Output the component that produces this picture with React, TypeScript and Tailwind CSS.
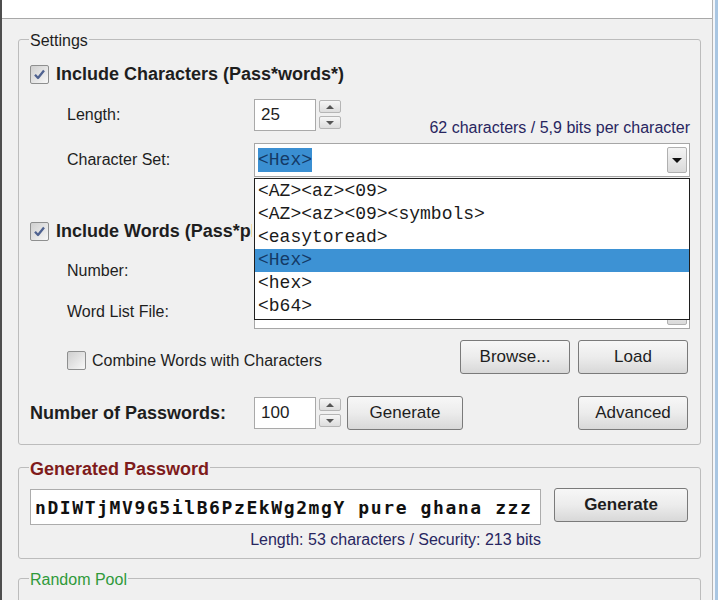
import React from "react";

const ui = "font-['Liberation_Sans',Arial,sans-serif]";
const mono = "font-['Liberation_Mono','Courier_New',monospace]";

function Check({ checked }: { checked?: boolean }) {
    return (
        <span className="flex h-[19px] w-[19px] shrink-0 items-center justify-center rounded-[2px] border border-[#8e8f8f] bg-linear-to-br from-[#cfcfcf] to-[#f8f8f8]">
            {checked && (
                <svg width="13" height="13" viewBox="0 0 13 13">
                    <path d="M2 6.8 L5 10 L11 2.5" fill="none" stroke="#4f6290" strokeWidth="2.3" strokeLinejoin="round" />
                </svg>
            )}
        </span>
    );
}

function Spin() {
    return (
        <div className="ml-[3px] flex flex-col gap-[3px] pt-[1px]">
            <span className="flex h-[13px] w-[22px] items-center justify-center rounded-[2px] border border-[#b5b5b5] bg-linear-to-b from-[#f6f6f6] to-[#dddddd]">
                <svg width="8" height="4" viewBox="0 0 8 4">
                    <path d="M0 4 L4 0 L8 4Z" fill="#555" />
                </svg>
            </span>
            <span className="flex h-[13px] w-[22px] items-center justify-center rounded-[2px] border border-[#b5b5b5] bg-linear-to-b from-[#f6f6f6] to-[#dddddd]">
                <svg width="8" height="4" viewBox="0 0 8 4">
                    <path d="M0 0 L8 0 L4 4Z" fill="#555" />
                </svg>
            </span>
        </div>
    );
}

function NumBox({ value }: { value?: string }) {
    return (
        <div className="flex h-[32px] w-[62px] items-center border border-[#a9a9a9] bg-white pl-[6px] text-[17px] text-[#1e1e1e]">
            {value}
        </div>
    );
}

function Btn({ label, w, bold }: { label: string; w: string; bold?: boolean }) {
    return (
        <button
            className={`${w} h-[34px] rounded-[3px] border border-[#7a7a7a] bg-linear-to-b from-[#f7f7f7] via-[#ececec] to-[#d8d8d8] text-[17px] text-[#1e1e1e] ${bold ? "font-bold" : ""}`}
        >
            {label}
        </button>
    );
}

function DropArrow() {
    return (
        <span className="ml-auto flex h-[26px] w-[20px] items-center justify-center rounded-[2px] border border-[#b0b0b0] bg-linear-to-b from-[#f4f4f4] to-[#dadada]">
            <svg width="10" height="5" viewBox="0 0 10 5">
                <path d="M0 0 L10 0 L5 5Z" fill="#111" />
            </svg>
        </span>
    );
}

const sets = ["<AZ><az><09>", "<AZ><az><09><symbols>", "<easytoread>", "<Hex>", "<hex>", "<b64>"];

export default function App() {
    return (
        <div className={`flex h-[600px] w-[718px] overflow-hidden bg-[#f0f0f0] ${ui} text-[#1e1e1e]`}>
            <div className="w-[2px] shrink-0 bg-[#4e4e4e]" />

            <div className="flex w-[710px] shrink-0 flex-col">
                <div className="h-[19px] shrink-0 border-b border-[#a8a8a8] bg-white" />

                {/* Settings */}
                <fieldset className="ml-[16px] mt-[10px] w-[683px] rounded-[3px] border border-[#bcbcbc] pb-[14px] pl-[11px] pr-[10px]">
                    <legend className="ml-[-1px] px-[1px] text-[16px] leading-[20px]">
                        <span className="relative top-[2px]">Settings</span>
                    </legend>

                    <div className="mt-[15px] flex h-[20px] items-center">
                        <Check checked />
                        <span className="ml-[7px] text-[18px] font-bold">Include Characters (Pass*words*)</span>
                    </div>

                    <div className="mt-[15px] flex h-[38px] items-start">
                        <span className="ml-[37px] flex h-[32px] w-[187px] items-center text-[16px]">Length:</span>
                        <NumBox value="25" />
                        <Spin />
                        <div className="flex flex-1 justify-end self-stretch">
                            <span className="self-end text-[16px] leading-[18px] text-[#282660]">
                                62 characters / 5,9 bits per character
                            </span>
                        </div>
                    </div>

                    <div className="mt-[6px] flex h-[34px] items-center">
                        <span className="ml-[37px] w-[187px] text-[16px]">Character Set:</span>
                        <div className="relative flex h-[34px] flex-1 items-center border border-[#a6a6a6] bg-white pl-[3px] pr-[2px]">
                            <span className={`${mono} h-[24px] bg-[#3a8fd2] text-[18px] leading-[24px] text-[#143a66]`}>
                                {"<Hex>"}
                            </span>
                            <DropArrow />

                            <div className="absolute left-[-1px] right-[-1px] top-[34px] z-10 border border-[#1e1e1e] bg-white py-[1px]">
                                {sets.map((s) => (
                                    <div
                                        key={s}
                                        className={`${mono} h-[23px] pl-[3px] text-[18px] leading-[23px] ${
                                            s === "<Hex>" ? "bg-[#3d92d4] text-[#143a66]" : "text-[#1a1a1a]"
                                        }`}
                                    >
                                        {s}
                                    </div>
                                ))}
                            </div>
                        </div>
                    </div>

                    <div className="mt-[44px] flex h-[20px] items-center">
                        <Check checked />
                        <span className="ml-[7px] w-[196px] overflow-hidden whitespace-nowrap text-[18px] font-bold">
                            Include Words (Pass*phrases*)
                        </span>
                    </div>

                    <div className="mt-[14px] flex h-[32px] items-center">
                        <span className="ml-[37px] w-[187px] text-[16px]">Number:</span>
                        <NumBox />
                        <Spin />
                    </div>

                    <div className="mt-[8px] flex h-[34px] items-center">
                        <span className="ml-[37px] w-[187px] text-[16px]">Word List File:</span>
                        <div className="flex h-[34px] flex-1 items-center border border-[#a6a6a6] bg-white pl-[3px] pr-[2px]">
                            <DropArrow />
                        </div>
                    </div>

                    <div className="mt-[11px] flex h-[34px] items-center">
                        <span className="ml-[37px] mt-[7px] flex items-center">
                            <Check />
                            <span className="ml-[6px] text-[16px]">Combine Words with Characters</span>
                        </span>
                        <div className="ml-auto mr-[2px] flex gap-[8px]">
                            <Btn label="Browse..." w="w-[110px]" />
                            <Btn label="Load" w="w-[110px]" />
                        </div>
                    </div>

                    <div className="mt-[22px] flex h-[34px] items-center">
                        <span className="w-[224px] text-[18px] font-bold">Number of Passwords:</span>
                        <div className="flex items-start">
                            <NumBox value="100" />
                            <Spin />
                        </div>
                        <div className="ml-[6px]">
                            <Btn label="Generate" w="w-[116px]" />
                        </div>
                        <div className="ml-auto mr-[2px]">
                            <Btn label="Advanced" w="w-[110px]" />
                        </div>
                    </div>
                </fieldset>

                {/* Generated Password */}
                <fieldset className="ml-[16px] mt-[12px] w-[683px] rounded-[3px] border border-[#bcbcbc] pb-[9px] pl-[11px] pr-[10px]">
                    <legend className="ml-[-1px] px-[1px] text-[18px] font-bold leading-[20px] text-[#7e1b1b]">
                        <span className="relative top-[2px]">Generated Password</span>
                    </legend>

                    <div className="mt-[11px] flex h-[37px] items-start">
                        <div className="mt-[1px] flex h-[36px] w-[511px] items-center overflow-hidden whitespace-nowrap border border-[#acacac] bg-white pl-[4px] font-['DejaVu_Sans_Mono',monospace] text-[18px] font-bold tracking-[1.6px] text-[#111]">
                            nDIWTjMV9G5ilB6PzEkWg2mgY pure ghana zzz
                        </div>
                        <div className="ml-[13px]">
                            <Btn label="Generate" w="w-[134px]" bold />
                        </div>
                    </div>

                    <div className="mt-[6px] w-[511px] text-right text-[16px] leading-[18px] text-[#282660]">
                        Length: 53 characters / Security: 213 bits
                    </div>
                </fieldset>

                {/* Random Pool */}
                <fieldset className="ml-[16px] mt-[9px] h-[60px] w-[683px] shrink-0 rounded-[3px] border border-[#bcbcbc]">
                    <legend className="ml-[10px] px-[1px] text-[16px] leading-[20px] text-[#2f9a3a]">
                        <span className="relative top-[2px]">Random Pool</span>
                    </legend>
                </fieldset>
            </div>

            <div className="flex shrink-0">
                <div className="w-[1px] bg-[#b4b4b4]" />
                <div className="w-[2px] bg-[#f3f6fa]" />
                <div className="w-[3px] bg-[#a9c6e2]" />
            </div>
        </div>
    );
}
